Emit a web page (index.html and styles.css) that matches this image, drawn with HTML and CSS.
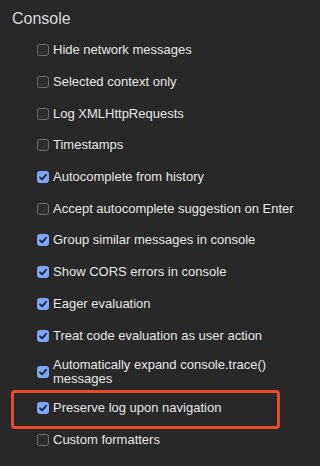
FILE: index.html
```html
<!DOCTYPE html>
<html>
<head>
<meta charset="utf-8">
<link rel="stylesheet" href="styles.css">
</head>
<body>
<div class="panel">
  <h2 class="title">Console</h2>
  <ul class="list">
    <li class="row"><span class="box"></span><span class="label">Hide network messages</span></li>
    <li class="row"><span class="box"></span><span class="label">Selected context only</span></li>
    <li class="row"><span class="box"></span><span class="label">Log XMLHttpRequests</span></li>
    <li class="row"><span class="box"></span><span class="label">Timestamps</span></li>
    <li class="row"><span class="box on"><svg viewBox="0 0 12 12"><path d="M3 6.3 L5.1 8.4 L9.2 3.6"/></svg></span><span class="label">Autocomplete from history</span></li>
    <li class="row"><span class="box"></span><span class="label">Accept autocomplete suggestion on Enter</span></li>
    <li class="row"><span class="box on"><svg viewBox="0 0 12 12"><path d="M3 6.3 L5.1 8.4 L9.2 3.6"/></svg></span><span class="label">Group similar messages in console</span></li>
    <li class="row"><span class="box on"><svg viewBox="0 0 12 12"><path d="M3 6.3 L5.1 8.4 L9.2 3.6"/></svg></span><span class="label">Show CORS errors in console</span></li>
    <li class="row"><span class="box on"><svg viewBox="0 0 12 12"><path d="M3 6.3 L5.1 8.4 L9.2 3.6"/></svg></span><span class="label">Eager evaluation</span></li>
    <li class="row"><span class="box on"><svg viewBox="0 0 12 12"><path d="M3 6.3 L5.1 8.4 L9.2 3.6"/></svg></span><span class="label">Treat code evaluation as user action</span></li>
    <li class="row two"><span class="box on"><svg viewBox="0 0 12 12"><path d="M3 6.3 L5.1 8.4 L9.2 3.6"/></svg></span><span class="label">Automatically expand console.trace()<br>messages</span></li>
    <li class="row highlight"><span class="box on"><svg viewBox="0 0 12 12"><path d="M3 6.3 L5.1 8.4 L9.2 3.6"/></svg></span><span class="label">Preserve log upon navigation</span></li>
    <li class="row"><span class="box"></span><span class="label">Custom formatters</span></li>
  </ul>
</div>
</body>
</html>
```
FILE: styles.css
```css
html, body {
  margin: 0;
  padding: 0;
  background: #282828;
}
.panel {
  width: 320px;
  height: 466px;
  overflow: hidden;
  font-family: "Liberation Sans", Arial, sans-serif;
  color: #e6e6e6;
  box-sizing: border-box;
  padding-top: 9px;
}
.title {
  margin: 0 0 0 12px;
  font-size: 16px;
  font-weight: normal;
  line-height: 20px;
  color: #dadada;
}
.list {
  list-style: none;
  margin: 5.5px 0 0 0;
  padding: 0;
}
.row {
  display: flex;
  align-items: center;
  height: 31.7px;
  margin-left: 37px;
  position: relative;
}
.row.two {
  height: 41px;
}
.label {
  font-size: 13px;
  line-height: 14px;
  margin-left: 4px;
  white-space: nowrap;
}
.box {
  width: 12px;
  height: 12px;
  box-sizing: border-box;
  border: 1px solid #6e6e6e;
  border-radius: 2.5px;
  background: #2e2e2e;
  flex: none;
  display: flex;
}
.box.on {
  background: #7ea8f3;
  border-color: #7ea8f3;
}
.box svg {
  width: 12px;
  height: 12px;
  margin: -1px;
}
.box svg path {
  fill: none;
  stroke: #1d2333;
  stroke-width: 1.8;
  stroke-linecap: round;
  stroke-linejoin: round;
}
.highlight {
  height: 32px;
}
.highlight::before {
  content: "";
  position: absolute;
  left: -26px;
  top: -2.5px;
  width: 269px;
  height: 39px;
  box-sizing: border-box;
  border: 3.5px solid #ea4a2b;
  border-radius: 4px;
}
```
